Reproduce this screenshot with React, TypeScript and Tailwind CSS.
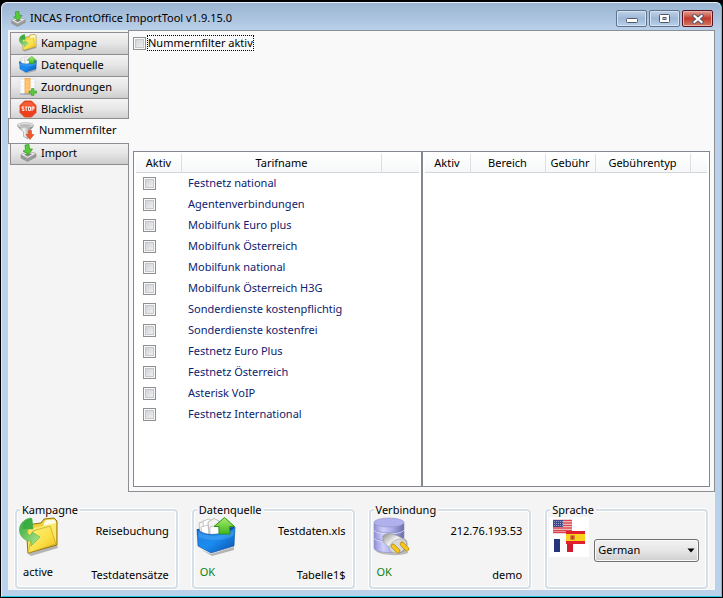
import { useState, type ReactNode } from "react";

type IconProps = { className?: string };

function FolderIcon({ className }: IconProps) {
  return (
    <svg viewBox="0 0 40 40" className={className} aria-hidden="true">
      <defs>
        <linearGradient id="folderFront" x1="0" y1="0" x2="1" y2="1">
          <stop offset="0" stopColor="#fff27a" />
          <stop offset="0.55" stopColor="#fbe04a" />
          <stop offset="1" stopColor="#f0b818" />
        </linearGradient>
        <linearGradient id="folderArrow" x1="0" y1="0" x2="1" y2="1">
          <stop offset="0" stopColor="#2fa53a" />
          <stop offset="1" stopColor="#b4ea90" />
        </linearGradient>
      </defs>
      <path d="M8 36 L38 28 L39 31 L12 39 Z" fill="#666" opacity="0.45" />
      <path d="M7 8 L22 6 L25 2 L35 1 L38 4 L38 28 L9 36 Z" fill="#f4cf3c" stroke="#8e7410" strokeWidth="1" />
      <path d="M25 6 L27 3 L35 2.500 L37 5 L37 10 L24 11 Z" fill="#fffce6" />
      <path d="M10 12 L37 6 L37 27 L9 35 Z" fill="#fae968" />
      <path d="M14 14 L31 9 L37 27 L9 36 Z" fill="url(#folderFront)" stroke="#b8931a" strokeWidth="0.600" />
      <path
        d="M12 1 C4 2 0 8 0.500 14 C1 20 6 24 12 24 L12 29 L21 20 L13 15 L12 18 C8 18 7 15 9 12 L14 12 L13 2 Z"
        fill="url(#folderArrow)"
        stroke="#4aa848"
        strokeWidth="0.500"
      />
      <path d="M12 1 C6 3 3 7 4 12 L14 12 L13 2 Z" fill="#35a840" opacity="0.8" />
    </svg>
  );
}

function SourceIcon({ className }: IconProps) {
  return (
    <svg viewBox="0 0 40 40" className={className} aria-hidden="true">
      <defs>
        <linearGradient id="boxFront" x1="0" y1="0" x2="1" y2="1">
          <stop offset="0" stopColor="#1f7fe0" />
          <stop offset="0.5" stopColor="#1a8cf0" />
          <stop offset="1" stopColor="#0a4fa8" />
        </linearGradient>
        <linearGradient id="upArrow" x1="0" y1="0" x2="0" y2="1">
          <stop offset="0" stopColor="#a5ee6c" />
          <stop offset="1" stopColor="#41b51e" />
        </linearGradient>
      </defs>
      <path d="M4 32 L15 37 L38 30 L38 33 L16 39 Z" fill="#666" opacity="0.45" />
      <path d="M1 12 L38 10 L38 18 L1 18 Z" fill="#0b4c9c" />
      <path d="M3 6 L9 4 L12 5 L12 17 L4 17 Z" fill="#f6f6f6" stroke="#9a9a9a" strokeWidth="0.600" />
      <path d="M7 4 L13 2 L17 4 L17 17 L8 17 Z" fill="#fff" stroke="#a5a5a5" strokeWidth="0.600" />
      <path d="M12 5 L18 1.500 L23 4 L23 17 L13 17 Z" fill="#f2f2f2" stroke="#9a9a9a" strokeWidth="0.600" />
      <path d="M5 10 L12 8 L13 18 L6 18 Z M14 10 L22 8 L24 18 L14 18 Z" fill="#fff" stroke="#a5a5a5" strokeWidth="0.600" />
      <path d="M1 12 C5 16 10 17 15 17.500 C26 17 34 15 39 10 L38 29 L15 36 L2 29 Z" fill="url(#boxFront)" stroke="#0d4fa0" strokeWidth="0.600" />
      <path d="M2 15 C10 20 28 20 38 14 L37 19 C28 24 12 24 3 20 Z" fill="#63b4f8" opacity="0.35" />
      <path d="M28.500 0.500 L38.500 9.500 L33.500 9.500 L34 17 L23 17 L23 9.500 L18 9.500 Z" fill="url(#upArrow)" stroke="#2f9418" strokeWidth="1" />
    </svg>
  );
}

function DatabaseIcon({ className }: IconProps) {
  return (
    <svg viewBox="0 0 40 40" className={className} aria-hidden="true">
      <defs>
        <linearGradient id="dbBody" x1="0" y1="0" x2="1" y2="0">
          <stop offset="0" stopColor="#8f8fd2" />
          <stop offset="0.3" stopColor="#cfcffc" />
          <stop offset="0.6" stopColor="#adadea" />
          <stop offset="1" stopColor="#6c6ca8" />
        </linearGradient>
        <linearGradient id="plugBody" x1="0" y1="0" x2="1" y2="1">
          <stop offset="0" stopColor="#8f8f8f" />
          <stop offset="0.4" stopColor="#f2f2f2" />
          <stop offset="1" stopColor="#8a8a8a" />
        </linearGradient>
      </defs>
      <path d="M3 34 C6 38 26 40 35 36 L33 28 Z" fill="#666" opacity="0.4" />
      <path d="M1 6 V31 C1 37 31 37 31 31 V6 Z" fill="url(#dbBody)" stroke="#8484ba" strokeWidth="0.500" />
      <path d="M1 13 C3 18 29 18 31 13 M1 21 C3 26 29 26 31 21" fill="none" stroke="#e8e8ff" strokeWidth="0.800" />
      <path d="M1 12 C3 17 29 17 31 12 M1 20 C3 25 29 25 31 20" fill="none" stroke="#7c7cba" strokeWidth="0.500" />
      <ellipse cx="16" cy="5.500" rx="15" ry="4.500" fill="#b0b0ec" stroke="#9292c8" strokeWidth="0.600" />
      <path d="M10 19 C14 15 21 17 25 19 L33 23 C36 28 33 35 26 36 L18 34 C16 28 11 27 10 24 Z" fill="url(#plugBody)" stroke="#8c8c8c" strokeWidth="0.600" />
      <ellipse cx="25" cy="29" rx="9" ry="6.500" transform="rotate(-25 25 29)" fill="#d8d8d8" stroke="#a4a4a4" strokeWidth="0.500" />
      <path d="M20 29 L25 34" stroke="#a87a08" strokeWidth="4.500" strokeLinecap="round" />
      <path d="M20 29 L25 34" stroke="#f6c61c" strokeWidth="3.300" strokeLinecap="round" />
      <path d="M29 27 L34 32" stroke="#a87a08" strokeWidth="4.500" strokeLinecap="round" />
      <path d="M29 27 L34 32" stroke="#f6c61c" strokeWidth="3.300" strokeLinecap="round" />
    </svg>
  );
}

function FlagsIcon({ className }: IconProps) {
  return (
    <svg viewBox="0 0 40 40" className={className} aria-hidden="true">
      <rect width="40" height="40" fill="#fff" />
      <rect x="4" y="3" width="19" height="13" fill="#f6dcdc" />
      <path d="M4 3.500 H23 M4 6 H23 M4 8.500 H23 M4 11 H23 M4 13.500 H23 M4 15.500 H23" stroke="#d9434f" strokeWidth="1.300" />
      <rect x="4" y="3" width="10" height="7" fill="#3c4a8c" />
      <path d="M5 4.500 H14 M5 6.500 H14 M5 8.500 H14" stroke="#aeb6d8" strokeWidth="0.800" strokeDasharray="1 1" />
      <rect x="5" y="22" width="6" height="13" fill="#27357f" />
      <rect x="11" y="22" width="7" height="13" fill="#fafafa" />
      <rect x="18" y="22" width="6" height="13" fill="#d01c30" />
      <rect x="17" y="14" width="19" height="13" fill="#e0202c" />
      <rect x="17" y="17" width="19" height="7" fill="#fbd21c" />
      <rect x="21" y="18" width="5" height="5" rx="1" fill="#d9802c" />
      <rect x="22.500" y="19" width="2" height="3" fill="#a83c28" />
    </svg>
  );
}

function ColumnsIcon({ className }: IconProps) {
  return (
    <svg viewBox="0 0 18 18" className={className} aria-hidden="true">
      <rect x="1" y="1" width="15" height="15" fill="#fdfdfd" stroke="#d4d8e4" strokeWidth="0.600" />
      <path d="M1 4.500 H16 M1 8 H16 M1 11.500 H16" stroke="#e8ebf2" strokeWidth="0.700" />
      <rect x="6" y="0.500" width="5" height="15.500" fill="#ffc066" stroke="#f0a640" strokeWidth="0.800" />
      <path d="M6 4.500 H11 M6 8 H11 M6 11.500 H11" stroke="#ffd28c" strokeWidth="0.700" />
      <path d="M1 16 H15" stroke="#7f96c0" strokeWidth="1" />
      <path d="M12.500 10.500 H15 V13 H17.500 V15.200 H15 V17.600 H12.500 V15.200 H10 V13 H12.500 Z" fill="#5cc63c" stroke="#3a9e28" strokeWidth="0.600" />
    </svg>
  );
}

function StopIcon({ className }: IconProps) {
  return (
    <svg viewBox="0 0 18 18" className={className} aria-hidden="true">
      <path d="M5.500 1 H12.500 L17 5.500 V12.500 L12.500 17 H5.500 L1 12.500 V5.500 Z" fill="#ee3f1c" stroke="#d8401e" strokeWidth="0.800" />
      <path d="M6 2 H12 L16 6 V8 H2 V6 Z" fill="#ff7a50" opacity="0.5" />
      <path
        d="M5 7 H3 V8.800 H5 V10.500 H3 M6 7 H8.400 M7.200 7 V11 M9.500 7 H11.500 V10.500 H9.500 Z M13 11 V7 H15 V9 H13"
        fill="none"
        stroke="#fff"
        strokeWidth="0.900"
      />
    </svg>
  );
}

function FunnelIcon({ className }: IconProps) {
  return (
    <svg viewBox="0 0 18 18" className={className} aria-hidden="true">
      <defs>
        <linearGradient id="funnelBody" x1="0" y1="0" x2="1" y2="0">
          <stop offset="0" stopColor="#8a8a8a" />
          <stop offset="0.4" stopColor="#f4f4f4" />
          <stop offset="1" stopColor="#6e6e6e" />
        </linearGradient>
      </defs>
      <path d="M0.500 3.500 C1 6 5 8 6.500 10 V14.500 L11 17 V10 C12.500 8 16 6 16.500 3.500 Z" fill="url(#funnelBody)" stroke="#808080" strokeWidth="0.500" />
      <ellipse cx="8.500" cy="3.200" rx="8" ry="2.500" fill="#ececec" stroke="#9c9c9c" strokeWidth="0.600" />
      <ellipse cx="8.500" cy="3.600" rx="6.200" ry="1.400" fill="#b4b4b4" />
      <path d="M11.500 8.500 H14.500 V12.500 H17 L13 17.500 L9 12.500 H11.500 Z" fill="#f0562a" stroke="#d04820" strokeWidth="0.600" />
    </svg>
  );
}

function ImportIcon({ className }: IconProps) {
  return (
    <svg viewBox="0 0 18 18" className={className} aria-hidden="true">
      <path d="M2 10.500 L9 7.500 L17 9.500 L17 13 L8.500 17.500 L2 14 Z" fill="#9a9a9a" stroke="#808080" strokeWidth="0.500" />
      <path d="M2 10.500 L9 7.500 L17 9.500 L8.500 14 Z" fill="#f0f0f0" stroke="#b0b0b0" strokeWidth="0.500" />
      <path d="M5 10.500 L9 9 L13.500 10 L8.500 12.700 Z" fill="#888" />
      <path d="M6 1 L10 0.500 L10.500 5 L13.500 5 L9.500 10.500 L4 7 L6.500 6 Z" fill="#56cc38" stroke="#2c9420" strokeWidth="0.700" />
    </svg>
  );
}

const tabs = [
  { label: "Kampagne", Icon: FolderIcon },
  { label: "Datenquelle", Icon: SourceIcon },
  { label: "Zuordnungen", Icon: ColumnsIcon },
  { label: "Blacklist", Icon: StopIcon },
  { label: "Nummernfilter", Icon: FunnelIcon },
  { label: "Import", Icon: ImportIcon },
];

const tariffs = [
  "Festnetz national",
  "Agentenverbindungen",
  "Mobilfunk Euro plus",
  "Mobilfunk Österreich",
  "Mobilfunk national",
  "Mobilfunk Österreich H3G",
  "Sonderdienste kostenpflichtig",
  "Sonderdienste kostenfrei",
  "Festnetz Euro Plus",
  "Festnetz Österreich",
  "Asterisk VoIP",
  "Festnetz International",
];

const checkboxClass =
  "block size-[13px] shrink-0 appearance-none border border-[#8e8f8f] bg-linear-to-br from-[#c6cad1] to-[#f8f8f8] shadow-[inset_0_0_0_1px_#f8f8f8,inset_0_0_0_2px_#c4c7cc] checked:bg-[#4a6fa5]";

function HeaderCell({ children, last }: { children?: ReactNode; last?: boolean }) {
  return (
    <th
      className={`h-[19px] border-b border-[#d5d5d5] bg-linear-to-b from-white to-[#f6f7f8] p-0 text-center font-normal ${
        last ? "" : "border-r border-r-[#dedfe1]"
      }`}
    >
      {children}
    </th>
  );
}

function InfoBox({ title, icon, status, ok, top, bottom }: {
  title: string;
  icon: ReactNode;
  status: string;
  ok?: boolean;
  top: string;
  bottom: string;
}) {
  return (
    <GroupBox title={title}>
      <div className="flex h-[70px] justify-between pr-[7px]">
        <div className="flex flex-col justify-between pb-[7px] pl-0.5">
          {icon}
          <span className={`pl-1 leading-4 ${ok ? "text-[#118011]" : ""}`}>{status}</span>
        </div>
        <div className="flex flex-col justify-between pt-1.5 pb-1 text-right leading-4">
          <span>{top}</span>
          <span>{bottom}</span>
        </div>
      </div>
    </GroupBox>
  );
}

function GroupBox({ title, children }: { title: string; children: ReactNode }) {
  return (
    <fieldset className="mx-[7px] min-w-0 rounded border-2 border-[#d5dfe8] shadow-[0_0_0_1px_#fff,inset_0_0_0_1px_#fff]">
      <legend className="ml-[3px] bg-[#f4f4f4] px-0.5 leading-[14px]">{title}</legend>
      {children}
    </fieldset>
  );
}

function CaptionButton({ label, danger, children }: { label: string; danger?: boolean; children: ReactNode }) {
  return (
    <button
      type="button"
      aria-label={label}
      className={`flex h-[17px] w-[31px] items-center justify-center rounded-xs border ${
        danger
          ? "border-[#5a1420] bg-linear-to-b from-[#e0a096] via-[#c0392a] via-50% to-[#d07a68] shadow-[inset_0_0_0_1px_#e8b0a8]"
          : "border-[#61738c] bg-linear-to-b from-[#bfd2e8] via-[#9db8d6] via-50% to-[#b8d0ea] shadow-[inset_0_0_0_1px_#d4e2f2]"
      }`}
    >
      {children}
    </button>
  );
}

export default function App() {
  const [active, setActive] = useState("Nummernfilter");

  return (
    <div className="flex min-h-screen flex-col bg-black pt-0.5 pr-px pb-px pl-px font-['Noto_Sans','Open_Sans',sans-serif] text-[11px] text-black">
      <div className="flex flex-1 flex-col rounded-t-md border border-t-[#e8f0f8] border-r-[#36d0ea] border-b-[#20c8dc] border-l-[#dfeaf6] bg-[#b9d1ea]">
        <header className="flex h-[27px] items-center justify-between rounded-t-md bg-linear-to-b from-[#99b3d1] to-[#b9d0e9] pt-1 pr-2 pl-2">
          <div className="flex items-center gap-1">
            <ImportIcon className="size-4" />
            <h1>INCAS FrontOffice ImportTool v1.9.15.0</h1>
          </div>
          <div className="flex gap-0.5">
            <CaptionButton label="Minimieren">
              <svg viewBox="0 0 12 6" className="mt-1 h-1.5 w-3" aria-hidden="true">
                <rect x="0.500" y="0.500" width="11" height="4" rx="1" fill="#fff" stroke="#535666" />
              </svg>
            </CaptionButton>
            <CaptionButton label="Maximieren">
              <svg viewBox="0 0 12 10" className="h-2.5 w-3" aria-hidden="true">
                <rect x="0.500" y="0.500" width="10" height="8" rx="1" fill="#fff" stroke="#535666" />
                <rect x="4" y="3.500" width="3" height="2" fill="#a9c1dc" stroke="#535666" />
              </svg>
            </CaptionButton>
            <CaptionButton label="Schließen" danger>
              <svg viewBox="0 0 12 10" className="h-2.5 w-3" aria-hidden="true">
                <path d="M2.500 2 L9.500 8 M9.500 2 L2.500 8" stroke="#535666" strokeWidth="4" strokeLinecap="square" />
                <path d="M2.500 2 L9.500 8 M9.500 2 L2.500 8" stroke="#fff" strokeWidth="2.200" strokeLinecap="square" />
              </svg>
            </CaptionButton>
          </div>
        </header>

        <main className="mr-1.5 mb-1.5 ml-1.5 flex flex-1 flex-col bg-[#f4f4f4]">
          <div className="flex flex-1">
            <div role="tablist" aria-orientation="vertical" className="z-10 -mr-px flex w-[121px] shrink-0 flex-col pt-0.5">
              {tabs.map(({ label, Icon }) => {
                const selected = label === active;
                return (
                  <button
                    key={label}
                    type="button"
                    role="tab"
                    aria-selected={selected}
                    onClick={() => setActive(label)}
                    className={`flex items-center gap-1 border border-[#8c8e94] pb-px pl-2 text-left ${
                      selected
                        ? "z-10 -my-0.5 h-[26px] border-r-0 bg-[#f9f9f9]"
                        : "-mb-px ml-0.5 h-[23px] bg-linear-to-b from-[#f3f3f3] via-[#e6e6e6] via-50% to-[#cdcdcd]"
                    }`}
                  >
                    <Icon className="size-[18px]" />
                    {label}
                  </button>
                );
              })}
            </div>

            <section role="tabpanel" className="flex min-w-0 flex-1 flex-col border border-[#8c8e94] bg-[#f9f9f9] p-1">
              <label className="mb-[100px] flex h-4 items-center self-start">
                <input type="checkbox" className={checkboxClass} />
                <span className="ml-px border border-dotted border-black leading-[14px]">Nummernfilter aktiv</span>
              </label>

              <div className="flex flex-1">
                <div className="flex-1 border border-[#828790] bg-white p-0.5">
                  <table className="w-full table-fixed border-separate border-spacing-0">
                    <colgroup>
                      <col className="w-[46px]" />
                      <col className="w-[200px]" />
                      <col />
                    </colgroup>
                    <thead>
                      <tr>
                        <HeaderCell>Aktiv</HeaderCell>
                        <HeaderCell>Tarifname</HeaderCell>
                        <HeaderCell last />
                      </tr>
                    </thead>
                    <tbody>
                      {tariffs.map((name) => (
                        <tr key={name} className="h-[21px] text-[#0c2270]">
                          <td className="p-0 pl-[7px]">
                            <input type="checkbox" aria-label={name} className={checkboxClass} />
                          </td>
                          <td colSpan={2} className="p-0 pl-1.5">{name}</td>
                        </tr>
                      ))}
                    </tbody>
                  </table>
                </div>
                <div className="flex-1 border border-[#828790] bg-white p-0.5">
                  <table className="w-full table-fixed border-separate border-spacing-0">
                    <colgroup>
                      <col className="w-[46px]" />
                      <col className="w-[75px]" />
                      <col className="w-[50px]" />
                      <col className="w-[95px]" />
                      <col />
                    </colgroup>
                    <thead>
                      <tr>
                        <HeaderCell>Aktiv</HeaderCell>
                        <HeaderCell>Bereich</HeaderCell>
                        <HeaderCell>Gebühr</HeaderCell>
                        <HeaderCell>Gebührentyp</HeaderCell>
                        <HeaderCell last />
                      </tr>
                    </thead>
                  </table>
                </div>
              </div>
            </section>
          </div>

          <footer className="grid grid-cols-4 pt-[11px] pb-px">
            <InfoBox title="Kampagne" icon={<FolderIcon className="size-10" />} status="active" top="Reisebuchung" bottom="Testdatensätze" />
            <InfoBox title="Datenquelle" icon={<SourceIcon className="size-10" />} status="OK" ok top="Testdaten.xls" bottom="Tabelle1$" />
            <InfoBox title="Verbindung" icon={<DatabaseIcon className="size-10" />} status="OK" ok top="212.76.193.53" bottom="demo" />
            <GroupBox title="Sprache">
              <div className="flex h-[70px] items-start pr-[7px] pl-0.5">
                <FlagsIcon className="size-10 shrink-0" />
                <div className="relative mt-[22px] ml-[5px] flex-1">
                  <select
                    aria-label="Sprache"
                    defaultValue="German"
                    className="block h-[23px] w-full appearance-none rounded-[3px] border border-[#707070] bg-linear-to-b from-[#f2f2f2] via-[#e6e6e6] via-50% to-[#cfcfcf] pl-[3px] shadow-[inset_0_0_0_1px_#fafafa]"
                  >
                    <option>German</option>
                    <option>English</option>
                  </select>
                  <svg viewBox="0 0 8 5" className="pointer-events-none absolute top-[9px] right-1 h-[5px] w-2" aria-hidden="true">
                    <path d="M0.500 0.500 H7.500 L4 4.500 Z" fill="#000" />
                  </svg>
                </div>
              </div>
            </GroupBox>
          </footer>
        </main>
      </div>
    </div>
  );
}
